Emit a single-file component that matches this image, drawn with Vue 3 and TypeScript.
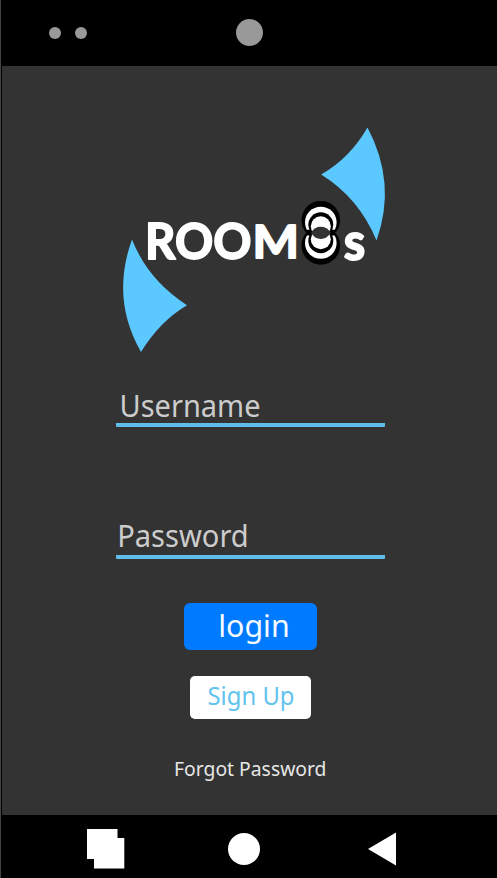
<script setup lang="ts">
import { ref } from 'vue'

interface Field {
  id: string
  label: string
  x: number
  baseline: number
  width: number
}

const fields = ref<Field[]>([
  { id: 'username', label: 'Username', x: 3.5, baseline: 33.2, width: 141 },
  { id: 'password', label: 'Password', x: 1.2, baseline: 31.3, width: 131.5 },
])
</script>

<template>
  <div class="phone">
    <header class="sensors">
      <i class="dot"></i>
      <i class="dot"></i>
      <i class="camera"></i>
    </header>

    <main class="screen">
      <svg class="logo" width="269" height="234" viewBox="116 123 269 234" role="img" aria-label="ROOM8s">
        <defs>
          <clipPath id="upper-ring"><rect x="300" y="200" width="42" height="29.800" /></clipPath>
          <clipPath id="lower-ring"><rect x="300" y="235.500" width="42" height="31" /></clipPath>
          <clipPath id="upper-half"><rect x="300" y="200" width="42" height="32.700" /></clipPath>
          <clipPath id="lower-half"><rect x="300" y="232.700" width="42" height="33" /></clipPath>
        </defs>
        <g fill="#5bc8ff">
          <path d="M367.500 127.500Q397 183 376.500 240.500Q359 198 321.200 174.500Q350 158 367.500 127.500Z" />
          <path d="M132 239.500Q148 280 187 305.200Q160 321 141 352Q110.500 299 132 239.500Z" />
        </g>
        <g class="wordmark">
          <text x="145" y="259.400" font-size="50.500" textLength="106.500" lengthAdjust="spacingAndGlyphs">ROO</text>
          <text x="252.500" y="258.300" font-size="46" textLength="46.500" lengthAdjust="spacingAndGlyphs">M</text>
          <text x="343.800" y="260.300" font-size="52" textLength="21.500" lengthAdjust="spacingAndGlyphs">s</text>
        </g>
        <circle cx="320.800" cy="220.200" r="19.300" fill="#000" />
        <circle cx="320.800" cy="245.400" r="19.300" fill="#000" />
        <circle cx="320.800" cy="222.500" r="15.800" fill="#fff" clip-path="url(#upper-ring)" />
        <circle cx="320.800" cy="243" r="15.800" fill="#fff" clip-path="url(#lower-ring)" />
        <circle cx="320.800" cy="224.800" r="12.500" fill="#000" clip-path="url(#upper-half)" />
        <circle cx="320.800" cy="240.700" r="12.500" fill="#000" clip-path="url(#lower-half)" />
        <circle cx="320.800" cy="226.300" r="10" fill="#fff" clip-path="url(#upper-half)" />
        <circle cx="320.800" cy="239.200" r="10" fill="#fff" clip-path="url(#lower-half)" />
        <path d="M301 231.500L307 232.700L301 234ZM340.600 231.500L334.600 232.700L340.600 234Z" fill="#333" />
        <path d="M311 232.700Q314.500 226.800 320.800 226.800T330.600 232.700Q327 238.900 320.800 238.900T311 232.700Z" fill="#333" />
      </svg>

      <div v-for="field in fields" :key="field.id" class="field">
        <svg class="caption" width="269" height="39">
          <text :x="field.x" :y="field.baseline" :textLength="field.width" lengthAdjust="spacingAndGlyphs">{{ field.label }}</text>
        </svg>
      </div>

      <button class="login" type="button">
        <svg width="132" height="47"><text x="34.200" y="34" textLength="71.500" lengthAdjust="spacingAndGlyphs">login</text></svg>
      </button>
      <button class="signup" type="button">
        <svg width="121" height="43"><text x="17.500" y="29.300" textLength="87" lengthAdjust="spacingAndGlyphs">Sign Up</text></svg>
      </button>
      <a class="forgot">
        <svg width="164" height="32"><text x="4" y="22" textLength="152.500" lengthAdjust="spacingAndGlyphs">Forgot Password</text></svg>
      </a>
    </main>

    <nav class="navbar">
      <svg width="497" height="63" viewBox="0 815 497 63" fill="#fff">
        <path d="M87 829H117.500V838H124.300V868.500H94V859H87Z" />
        <circle cx="244" cy="849" r="16" />
        <path d="M368 849L396 832.500V865.500Z" />
      </svg>
    </nav>
  </div>
</template>

<style>
body {
  margin: 0;
  background: #000;
}
</style>

<style scoped>
.phone {
  box-sizing: border-box;
  width: 497px;
  height: 878px;
  display: flex;
  flex-direction: column;
  background: #000;
  border-left: 1px solid #444;
  font-family: "Noto Sans", sans-serif;
  overflow: hidden;
}
.sensors {
  height: 66px;
  box-sizing: border-box;
  flex: none;
  display: flex;
  align-items: center;
  padding: 0 0 1px 48px;
}
.dot {
  width: 12px;
  height: 12px;
  margin-right: 14px;
  border-radius: 50%;
  background: #999;
}
.camera {
  width: 27px;
  height: 27px;
  margin-left: 135px;
  border-radius: 50%;
  background: #999;
}
.screen {
  flex: none;
  box-sizing: border-box;
  height: 749px;
  margin-left: 1px;
  padding: 57px 0 0 114px;
  display: flex;
  flex-direction: column;
  align-items: flex-start;
  background: #333;
}
svg {
  display: block;
  overflow: visible;
}
.wordmark {
  fill: #fff;
  stroke: #fff;
  stroke-width: 1.8;
  stroke-linejoin: round;
  font-family: Lato, sans-serif;
  font-weight: 700;
}
.field {
  width: 269px;
  height: 39px;
  margin-top: 27px;
  margin-bottom: 62px;
  border-bottom: 4px solid #5fbde9;
  border-radius: 1px;
}
.field + .field {
  margin-bottom: 44px;
}
.caption {
  font-size: 31.500px;
  fill: #ccc;
}
button {
  padding: 0;
  border: 0;
  font: inherit;
}
.login {
  width: 132.500px;
  height: 47px;
  border-radius: 6px;
  margin-left: 68px;
  background: #007bff;
  fill: #f4faff;
  font-size: 31.500px;
}
.signup {
  width: 121px;
  height: 43px;
  margin: 26px 0 0 74px;
  border-radius: 5px;
  background: #fff;
  fill: #62c3ee;
  font-size: 24.500px;
}
.forgot {
  margin: 35px 0 0 54px;
  fill: #e6e6e6;
  font-size: 20.500px;
}
.navbar {
  height: 63px;
  margin-left: -1px;
}
</style>
